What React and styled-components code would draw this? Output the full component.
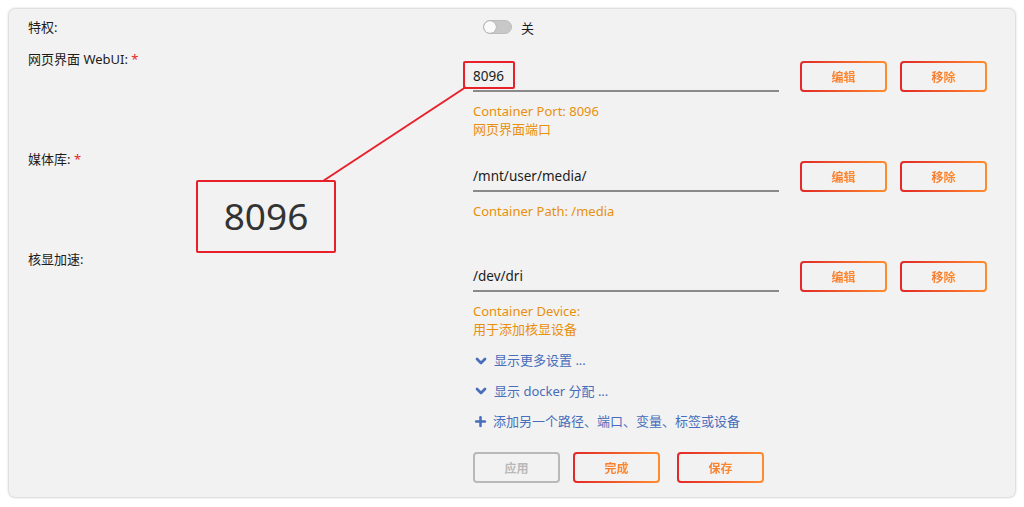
import React from "react";
import styled, { createGlobalStyle } from "styled-components";
import { ChevronDown, Plus } from "lucide-react";

const GlobalStyle = createGlobalStyle`
  html, body {
    margin: 0;
    padding: 0;
    background: #ffffff;
  }
  body {
    font-family: "Noto Sans", "Noto Sans CJK SC", sans-serif;
    font-size: 13px;
    color: #1c1c1c;
  }
`;

const rows = [
  {
    label: "网页界面 WebUI:",
    required: true,
    value: "8096",
    help: ["Container Port: 8096", "网页界面端口"],
  },
  {
    label: "媒体库:",
    required: true,
    value: "/mnt/user/media/",
    help: ["Container Path: /media", ""],
  },
  {
    label: "核显加速:",
    required: false,
    value: "/dev/dri",
    help: ["Container Device:", "用于添加核显设备"],
  },
];

function App() {
  return (
    <>
      <GlobalStyle />
      <Page>
        <Card>
          <Row>
            <Label>特权:</Label>
            <ToggleWrap>
              <Toggle>
                <Knob />
              </Toggle>
              <span>关</span>
            </ToggleWrap>
          </Row>

          {rows.map((r) => (
            <ConfigRow key={r.label}>
              <Label>
                {r.label} {r.required && <Star>*</Star>}
              </Label>
              <Content>
                <InputLine>
                  <Field>{r.value}</Field>
                  <GradButton>
                    <GradText>编辑</GradText>
                  </GradButton>
                  <GradButton>
                    <GradText>移除</GradText>
                  </GradButton>
                </InputLine>
                <Help>
                  {r.help.map((h, i) => (
                    <div key={i}>{h || "\u00a0"}</div>
                  ))}
                </Help>
              </Content>
            </ConfigRow>
          ))}

          <Row>
            <span />
            <Links>
              <LinkItem>
                <ChevronDown size={16} strokeWidth={4} />
                显示更多设置 ...
              </LinkItem>
              <LinkItem>
                <ChevronDown size={16} strokeWidth={4} />
                显示 docker 分配 ...
              </LinkItem>
              <LinkItem>
                <Plus size={15} strokeWidth={4} />
                添加另一个路径、端口、变量、标签或设备
              </LinkItem>
            </Links>
          </Row>

          <Row>
            <span />
            <Actions>
              <PlainButton disabled>应用</PlainButton>
              <GradButton>
                <GradText>完成</GradText>
              </GradButton>
              <GradButton $wide>
                <GradText>保存</GradText>
              </GradButton>
            </Actions>
          </Row>

          <Callout>
            <svg width="1024" height="507">
              <line x1="466" y1="87" x2="323" y2="181" stroke="#e8202a" strokeWidth="2" />
            </svg>
          </Callout>
          <SmallMark />
          <ZoomBox>8096</ZoomBox>
        </Card>
      </Page>
    </>
  );
}

const Page = styled.div`
  padding: 9px 9px 10px 9px;
`;

const Card = styled.div`
  position: relative;
  background: #f2f2f2;
  border-radius: 6px;
  box-shadow: 0 0 3px rgba(0, 0, 0, 0.35);
  padding: 9px 19px 12px 19px;
  height: 488px;
  box-sizing: border-box;
`;

const Row = styled.div`
  display: grid;
  grid-template-columns: 445px 1fr;
  align-items: start;
`;

const ConfigRow = styled(Row)`
  margin-top: 14px;
  & + & {
    margin-top: 12px;
  }
`;

const Label = styled.div`
  line-height: 18px;
  color: #1c1c1c;
`;

const Star = styled.span`
  color: #e22828;
`;

const ToggleWrap = styled.div`
  display: flex;
  align-items: center;
  gap: 9px;
  padding-left: 10px;
  height: 18px;
`;

const Toggle = styled.div`
  width: 27px;
  height: 12px;
  border-radius: 7px;
  background: #c8c8c8;
  border: 1px solid #bdbdbd;
  display: flex;
  align-items: center;
`;

const Knob = styled.div`
  width: 12px;
  height: 12px;
  border-radius: 50%;
  background: #fafafa;
  box-shadow: 0 0 1px rgba(0, 0, 0, 0.4);
`;

const Content = styled.div`
  padding-top: 11px;
`;

const InputLine = styled.div`
  display: flex;
  align-items: center;
`;

const Field = styled.div`
  width: 306px;
  height: 30px;
  box-sizing: border-box;
  border-bottom: 2px solid #8a8a8a;
  display: flex;
  align-items: center;
  padding-top: 1px;
  font-size: 13.5px;
  color: #1c1c1c;
  margin-right: 21px;
`;

const GradButton = styled.button`
  width: 87px;
  height: 31px;
  border: 2px solid transparent;
  border-radius: 4px;
  background: linear-gradient(#f2f2f2, #f2f2f2) padding-box,
    linear-gradient(90deg, #e22828, #ff8c2f) border-box;
  font-family: "Noto Sans", "Noto Sans CJK SC", sans-serif;
  font-size: 12px;
  font-weight: 700;
  padding: 0;
  margin-right: 13px;
  margin-left: ${(p) => (p.$wide ? "4px" : "0")};
  display: flex;
  align-items: center;
  justify-content: center;
  cursor: pointer;
`;

const GradText = styled.span`
  background: linear-gradient(90deg, #f47a2e, #ff8c2f);
  -webkit-background-clip: text;
  background-clip: text;
  color: transparent;
`;

const PlainButton = styled.button`
  width: 87px;
  height: 31px;
  border: 2px solid #b9b9b9;
  border-radius: 4px;
  background: #f2f2f2;
  color: #b9b9b9;
  font-family: "Noto Sans", "Noto Sans CJK SC", sans-serif;
  font-size: 12px;
  font-weight: 700;
  padding: 0;
  margin-right: 13px;
`;

const Help = styled.div`
  margin-top: 10px;
  line-height: 18px;
  color: #e8900c;
  font-size: 13px;
`;

const Links = styled.div`
  display: flex;
  flex-direction: column;
  gap: 12.5px;
  margin-top: 13px;
`;

const LinkItem = styled.div`
  display: flex;
  align-items: center;
  gap: 5px;
  line-height: 18px;
  color: #486dba;
  cursor: pointer;
  svg {
    color: #486dba;
    margin-top: 1px;
  }
`;

const Actions = styled.div`
  display: flex;
  margin-top: 22px;
`;

const Callout = styled.div`
  position: absolute;
  left: -9px;
  top: -9px;
  pointer-events: none;
`;

const SmallMark = styled.div`
  position: absolute;
  left: 454px;
  top: 52px;
  width: 52px;
  height: 28px;
  border: 2px solid #e8202a;
  border-radius: 2px;
  box-sizing: border-box;
`;

const ZoomBox = styled.div`
  position: absolute;
  left: 187px;
  top: 171px;
  width: 140px;
  height: 73px;
  border: 2px solid #e8202a;
  border-radius: 2px;
  box-sizing: border-box;
  background: #f2f2f2;
  display: flex;
  align-items: center;
  justify-content: center;
  font-size: 37px;
  color: #333333;
  padding-bottom: 2px;
`;

export default App;
